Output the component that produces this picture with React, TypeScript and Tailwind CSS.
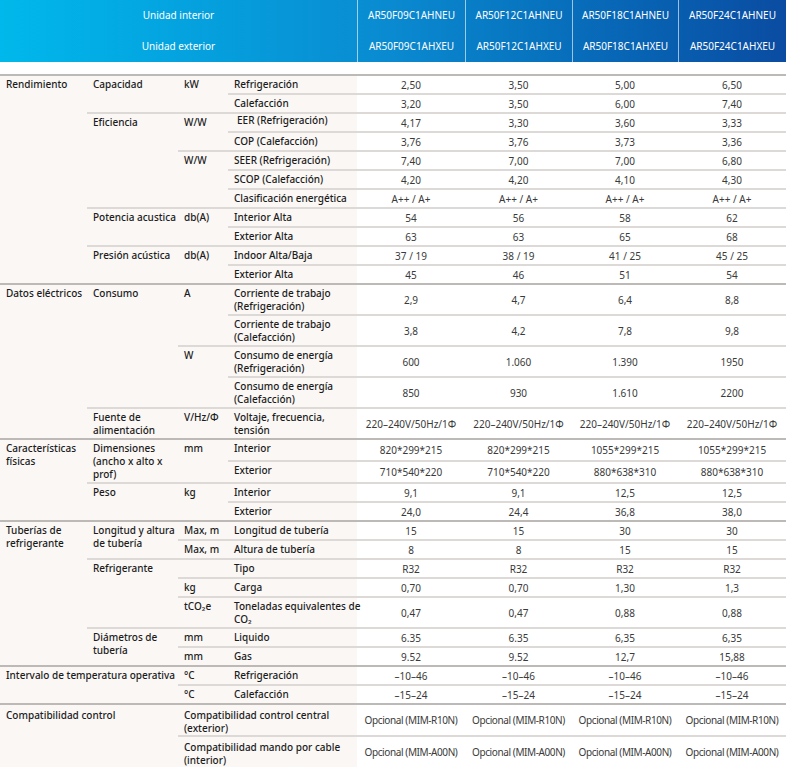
import type { ReactNode } from 'react'

type Cell = { t: ReactNode; rs?: number; cs?: number; cls?: string }
type Row = { cells: Cell[]; vals: string[]; sec?: boolean; tight?: boolean }

const models = [
  ['AR50F09C1AHNEU', 'AR50F09C1AHXEU'],
  ['AR50F12C1AHNEU', 'AR50F12C1AHXEU'],
  ['AR50F18C1AHNEU', 'AR50F18C1AHXEU'],
  ['AR50F24C1AHNEU', 'AR50F24C1AHXEU'],
]

// labels in the last block sit a little lower in their rows
const low = 'pt-[4px] pb-0'

const rows: Row[] = [
  // Rendimiento
  { sec: true, cells: [{ t: 'Rendimiento', rs: 11 }, { t: 'Capacidad', rs: 2 }, { t: 'kW', rs: 2 }, { t: 'Refrigeración' }], vals: ['2,50', '3,50', '5,00', '6,50'] },
  { cells: [{ t: 'Calefacción' }], vals: ['3,20', '3,50', '6,00', '7,40'] },
  { cells: [{ t: 'Eficiencia', rs: 5 }, { t: 'W/W', rs: 2 }, { t: 'EER (Refrigeración)', cls: 'pl-[9px]' }], vals: ['4,17', '3,30', '3,60', '3,33'] },
  { cells: [{ t: 'COP (Calefacción)' }], vals: ['3,76', '3,76', '3,73', '3,36'] },
  { cells: [{ t: 'W/W', rs: 3 }, { t: 'SEER (Refrigeración)' }], vals: ['7,40', '7,00', '7,00', '6,80'] },
  { cells: [{ t: 'SCOP (Calefacción)' }], vals: ['4,20', '4,20', '4,10', '4,30'] },
  { cells: [{ t: 'Clasificación energética' }], vals: ['A++ / A+', 'A++ / A+', 'A++ / A+', 'A++ / A+'] },
  { cells: [{ t: 'Potencia acustica', rs: 2 }, { t: 'db(A)', rs: 2 }, { t: 'Interior Alta' }], vals: ['54', '56', '58', '62'] },
  { cells: [{ t: 'Exterior Alta' }], vals: ['63', '63', '65', '68'] },
  { cells: [{ t: 'Presión acústica', rs: 2 }, { t: 'db(A)', rs: 2 }, { t: 'Indoor Alta/Baja' }], vals: ['37 / 19', '38 / 19', '41 / 25', '45 / 25'] },
  { cells: [{ t: 'Exterior Alta' }], vals: ['45', '46', '51', '54'] },

  // Datos eléctricos
  {
    sec: true,
    cells: [
      { t: 'Datos eléctricos', rs: 5 },
      { t: 'Consumo', rs: 4 },
      { t: 'A', rs: 2 },
      { t: <>Corriente de trabajo<br />(Refrigeración)</> },
    ],
    vals: ['2,9', '4,7', '6,4', '8,8'],
  },
  { cells: [{ t: <>Corriente de trabajo<br />(Calefacción)</> }], vals: ['3,8', '4,2', '7,8', '9,8'] },
  { cells: [{ t: 'W', rs: 2 }, { t: <>Consumo de energía<br />(Refrigeración)</> }], vals: ['600', '1.060', '1.390', '1950'] },
  { cells: [{ t: <>Consumo de energía<br />(Calefacción)</> }], vals: ['850', '930', '1.610', '2200'] },
  {
    cells: [{ t: <>Fuente de<br />alimentación</> }, { t: 'V/Hz/Φ' }, { t: <>Voltaje, frecuencia,<br />tensión</> }],
    vals: ['220–240V/50Hz/1Φ', '220–240V/50Hz/1Φ', '220–240V/50Hz/1Φ', '220–240V/50Hz/1Φ'],
  },

  // Características físicas
  {
    sec: true,
    cells: [
      { t: <>Características<br />físicas</>, rs: 4 },
      { t: <>Dimensiones<br />(ancho x alto x<br />prof)</>, rs: 2 },
      { t: 'mm', rs: 2 },
      { t: 'Interior' },
    ],
    vals: ['820*299*215', '820*299*215', '1055*299*215', '1055*299*215'],
  },
  { cells: [{ t: 'Exterior' }], vals: ['710*540*220', '710*540*220', '880*638*310', '880*638*310'] },
  { cells: [{ t: 'Peso', rs: 2 }, { t: 'kg', rs: 2 }, { t: 'Interior' }], vals: ['9,1', '9,1', '12,5', '12,5'] },
  { cells: [{ t: 'Exterior' }], vals: ['24,0', '24,4', '36,8', '38,0'] },

  // Tuberías de refrigerante
  {
    sec: true,
    cells: [
      { t: <>Tuberías de<br />refrigerante</>, rs: 7 },
      { t: <>Longitud y altura<br />de tubería</>, rs: 2 },
      { t: 'Max, m' },
      { t: 'Longitud de tubería' },
    ],
    vals: ['15', '15', '30', '30'],
  },
  { cells: [{ t: 'Max, m' }, { t: 'Altura de tubería' }], vals: ['8', '8', '15', '15'] },
  { cells: [{ t: 'Refrigerante', rs: 3 }, { t: '' }, { t: 'Tipo' }], vals: ['R32', 'R32', 'R32', 'R32'] },
  { cells: [{ t: 'kg' }, { t: 'Carga' }], vals: ['0,70', '0,70', '1,30', '1,3'] },
  { cells: [{ t: 'tCO₂e' }, { t: <>Toneladas equivalentes de<br />CO₂</> }], vals: ['0,47', '0,47', '0,88', '0,88'] },
  { cells: [{ t: <>Diámetros de<br />tubería</>, rs: 2 }, { t: 'mm' }, { t: 'Liquido' }], vals: ['6.35', '6.35', '6,35', '6,35'] },
  { cells: [{ t: 'mm' }, { t: 'Gas' }], vals: ['9.52', '9.52', '12,7', '15,88'] },

  // Intervalo de temperatura
  {
    sec: true,
    cells: [{ t: 'Intervalo de temperatura operativa', rs: 2, cs: 2 }, { t: '°C' }, { t: 'Refrigeración' }],
    vals: ['–10–46', '–10–46', '–10–46', '–10–46'],
  },
  { cells: [{ t: '°C' }, { t: 'Calefacción' }], vals: ['–15–24', '–15–24', '–15–24', '–15–24'] },

  // Compatibilidad
  {
    sec: true,
    tight: true,
    cells: [
      { t: 'Compatibilidad control', rs: 2, cs: 2, cls: low },
      { t: <>Compatibilidad control central<br />(exterior)</>, cs: 2, cls: low },
    ],
    vals: ['Opcional (MIM-R10N)', 'Opcional (MIM-R10N)', 'Opcional (MIM-R10N)', 'Opcional (MIM-R10N)'],
  },
  {
    tight: true,
    cells: [{ t: <>Compatibilidad mando por cable<br />(interior)</>, cs: 2, cls: low }],
    vals: ['Opcional (MIM-A00N)', 'Opcional (MIM-A00N)', 'Opcional (MIM-A00N)', 'Opcional (MIM-A00N)'],
  },
]

export default function App() {
  return (
    <div className="w-[786px] bg-white font-['Noto_Sans',sans-serif] text-[10px] leading-[13px]">
      {/* Model header */}
      <div className="grid h-[62px] grid-cols-[357px_108px_107px_106px_108px] bg-linear-to-r from-[#00b8eb] via-[#0a8ad0] to-[#0a4ca2] text-white">
        <div className="flex flex-col">
          <div className="flex h-[31px] items-center justify-center">Unidad interior</div>
          <div className="flex h-[31px] items-center justify-center">Unidad exterior</div>
        </div>
        {models.map(([a, b]) => (
          <div key={a} className="flex flex-col border-l border-white/60">
            <div className="flex h-[31px] items-center justify-center">{a}</div>
            <div className="flex h-[31px] items-center justify-center">{b}</div>
          </div>
        ))}
      </div>

      {/* Spec table */}
      <table className="mt-[12px] w-[786px] table-fixed border-separate border-spacing-0">
        <colgroup>
          <col className="w-[87px]" />
          <col className="w-[91px]" />
          <col className="w-[50px]" />
          <col className="w-[129px]" />
          <col className="w-[108px]" />
          <col className="w-[107px]" />
          <col className="w-[106px]" />
          <col className="w-[108px]" />
        </colgroup>
        <tbody>
          {rows.map((row, i) => {
            const line = row.sec ? 'border-[#bcb9b7]' : 'border-[#dcd9d7]'
            return (
              <tr key={i}>
                {row.cells.map((c, j) => (
                  <td
                    key={j}
                    rowSpan={c.rs}
                    colSpan={c.cs}
                    className={`h-[19px] border-t-2 ${line} bg-[#faf7f5] pl-[6px] pr-1 text-left align-top font-medium whitespace-nowrap text-[#1c1c1c] ${c.cls ?? 'pt-[2px] pb-[1px]'}`}
                  >
                    {c.t}
                  </td>
                ))}
                {row.vals.map((v, j) => (
                  <td
                    key={'v' + j}
                    className={`h-[19px] border-t-2 ${line} pt-[2px] pb-[1px] text-center align-middle whitespace-nowrap text-[#3a3a3a] ${row.tight ? 'tracking-[-0.4px]' : ''}`}
                  >
                    {v}
                  </td>
                ))}
              </tr>
            )
          })}
        </tbody>
      </table>
    </div>
  )
}
